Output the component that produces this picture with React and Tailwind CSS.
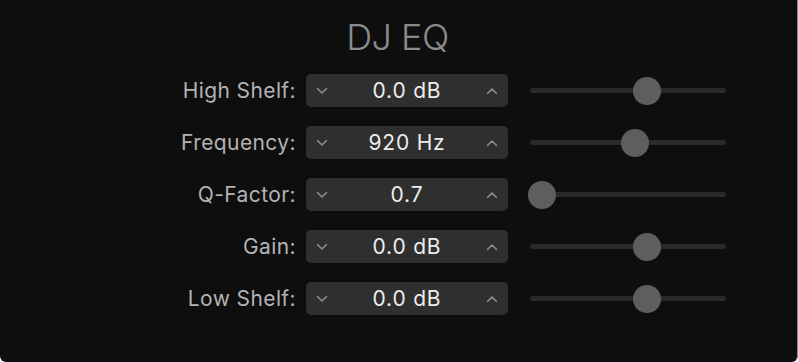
import React from 'react';

const rows = [
  { label: 'High Shelf:', value: '0.0 dB', pos: 0.62 },
  { label: 'Frequency:', value: '920 Hz', pos: 0.545 },
  { label: 'Q-Factor:', value: '0.7', pos: 0 },
  { label: 'Gain:', value: '0.0 dB', pos: 0.62 },
  { label: 'Low Shelf:', value: '0.0 dB', pos: 0.62 },
];

const Chevron = ({ up }) => (
  <svg width="12" height="8" viewBox="0 0 12 8" fill="none">
    <path
      d={up ? 'M1.5 6.5 L6 2 L10.5 6.5' : 'M1.5 1.5 L6 6 L10.5 1.5'}
      stroke="#8c8c8c"
      strokeWidth="1.6"
      strokeLinecap="round"
      strokeLinejoin="round"
    />
  </svg>
);

const Slider = ({ pos }) => (
  <div className="relative ml-[22px] w-[196px] h-[28px] flex items-center">
    <div className="w-full h-[5px] rounded-full bg-[#2a2a2a]" />
    <div
      className="absolute top-0 w-[28px] h-[28px] rounded-full bg-[#5e5e5e]"
      style={{ left: `${-2 + pos * 170}px` }}
    />
  </div>
);

const App = () => {
  return (
    <div className="w-[798px] h-[362px] bg-white" style={{ fontFamily: 'Inter, "Noto Sans", sans-serif' }}>
      <div className="w-[798px] h-[362px] bg-[#0e0e0e] rounded-b-[6px] border-r border-[#8a8a8a] flex flex-col">
        <div className="h-[74px] flex justify-center">
          <h1 className="mt-[16px] text-[36px] leading-[42px] font-light text-[#8b8b8b] tracking-[-0.5px] ml-[-2px]">
            DJ EQ
          </h1>
        </div>
        <div className="flex flex-col gap-[19px]">
          {rows.map((r) => (
            <div key={r.label} className="flex items-center">
              <div className="w-[306px] pr-[10px] text-right text-[21px] tracking-[0.4px] text-[#b3b3b3]">{r.label}</div>
              <div className="w-[202px] h-[33px] rounded-[5px] bg-[#2f2f2f] flex items-center justify-between px-[10px]">
                <Chevron />
                <span className="text-[21px] tracking-[0.8px] text-[#ececec]">{r.value}</span>
                <Chevron up />
              </div>
              <Slider pos={r.pos} />
            </div>
          ))}
        </div>
      </div>
    </div>
  );
};

export default App;
